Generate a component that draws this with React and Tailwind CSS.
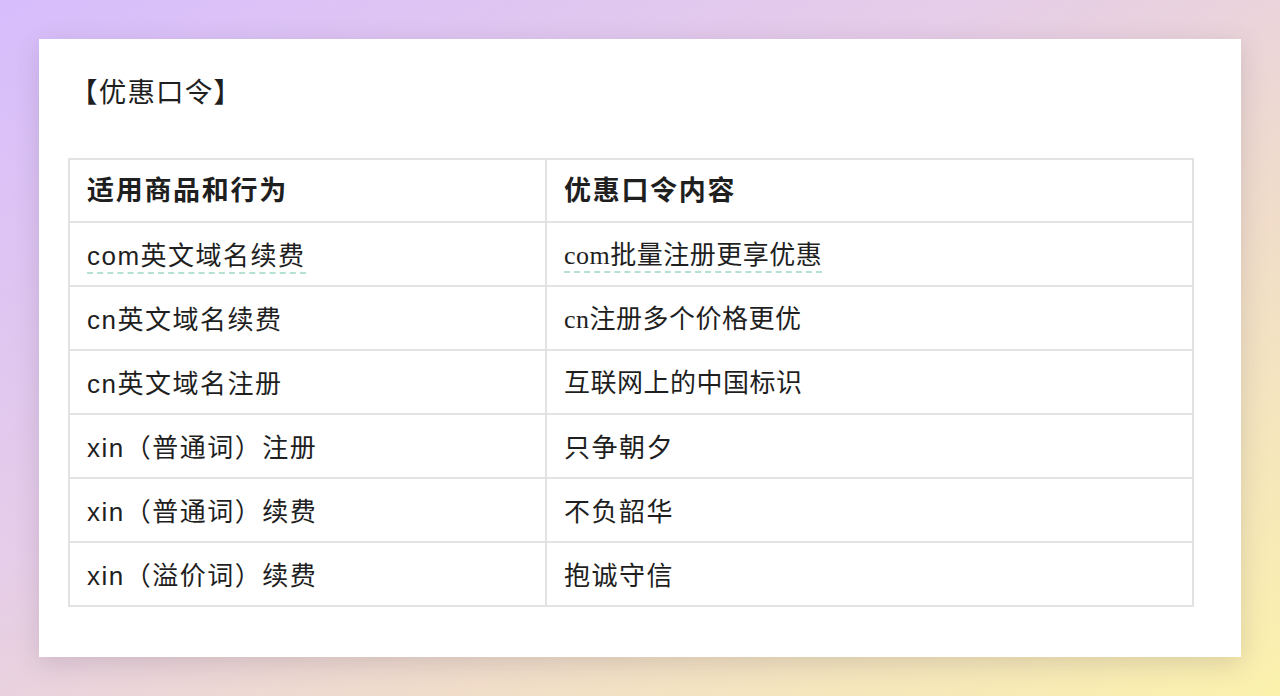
export default function App() {
  const rows = [
    { a: "com英文域名续费", b: "com批量注册更享优惠", underline: true, serif: true },
    { a: "cn英文域名续费", b: "cn注册多个价格更优", serif: true },
    { a: "cn英文域名注册", b: "互联网上的中国标识", serif: true },
    { a: "xin（普通词）注册", b: "只争朝夕" },
    { a: "xin（普通词）续费", b: "不负韶华" },
    { a: "xin（溢价词）续费", b: "抱诚守信" },
  ];
  const sans = "font-['Helvetica_Neue','Liberation_Sans','Noto_Sans_CJK_SC',sans-serif]";
  const serif = "font-['Liberation_Serif','Noto_Sans_CJK_SC',serif] tracking-[0.5px]";
  const ul = "border-b-2 border-dashed border-[#b4e0d6] pb-[1px]";
  return (
    <div className="w-[1280px] h-[696px] overflow-hidden bg-[linear-gradient(150deg,#d7bdfc_0%,#e6cde8_40%,#f0dccb_65%,#fbf1ac_100%)] pt-[39px] pl-[39px]">
      <div className={`w-[1202px] h-[618px] bg-white shadow-[0_6px_24px_rgba(80,60,90,0.18)] pt-[34px] px-[29px] ${sans} text-[#1f1f1f]`}>
        <div className="pl-[2px] text-[27.5px] leading-[40px] tracking-[1.2px]">【优惠口令】</div>
        <table className="mt-[45px] w-[1124px] border-collapse table-fixed">
          <colgroup>
            <col className="w-[477px]" />
            <col className="w-[647px]" />
          </colgroup>
          <thead>
            <tr className="h-[63px]">
              <th className="border-2 border-[#e2e2e2] text-left font-bold text-[27px] pl-[17px] tracking-[1.7px] pt-[2px]">适用商品和行为</th>
              <th className="border-2 border-[#e2e2e2] text-left font-bold text-[27px] pl-[17px] tracking-[1.7px] pt-[2px]">优惠口令内容</th>
            </tr>
          </thead>
          <tbody>
            {rows.map((r, i) => (
              <tr key={i} className="h-[64px]">
                <td className="border-2 border-[#e2e2e2] pl-[17px] text-[26px] leading-[36px] tracking-[1.5px] pt-[3px]">
                  <span className={r.underline ? ul : ""}>{r.a}</span>
                </td>
                <td className={`border-2 border-[#e2e2e2] pl-[17px] text-[26px] leading-[36px] pt-[3px] ${r.serif ? serif : "tracking-[1.5px]"}`}>
                  <span className={r.underline ? ul : ""}>{r.b}</span>
                </td>
              </tr>
            ))}
          </tbody>
        </table>
      </div>
    </div>
  );
}
